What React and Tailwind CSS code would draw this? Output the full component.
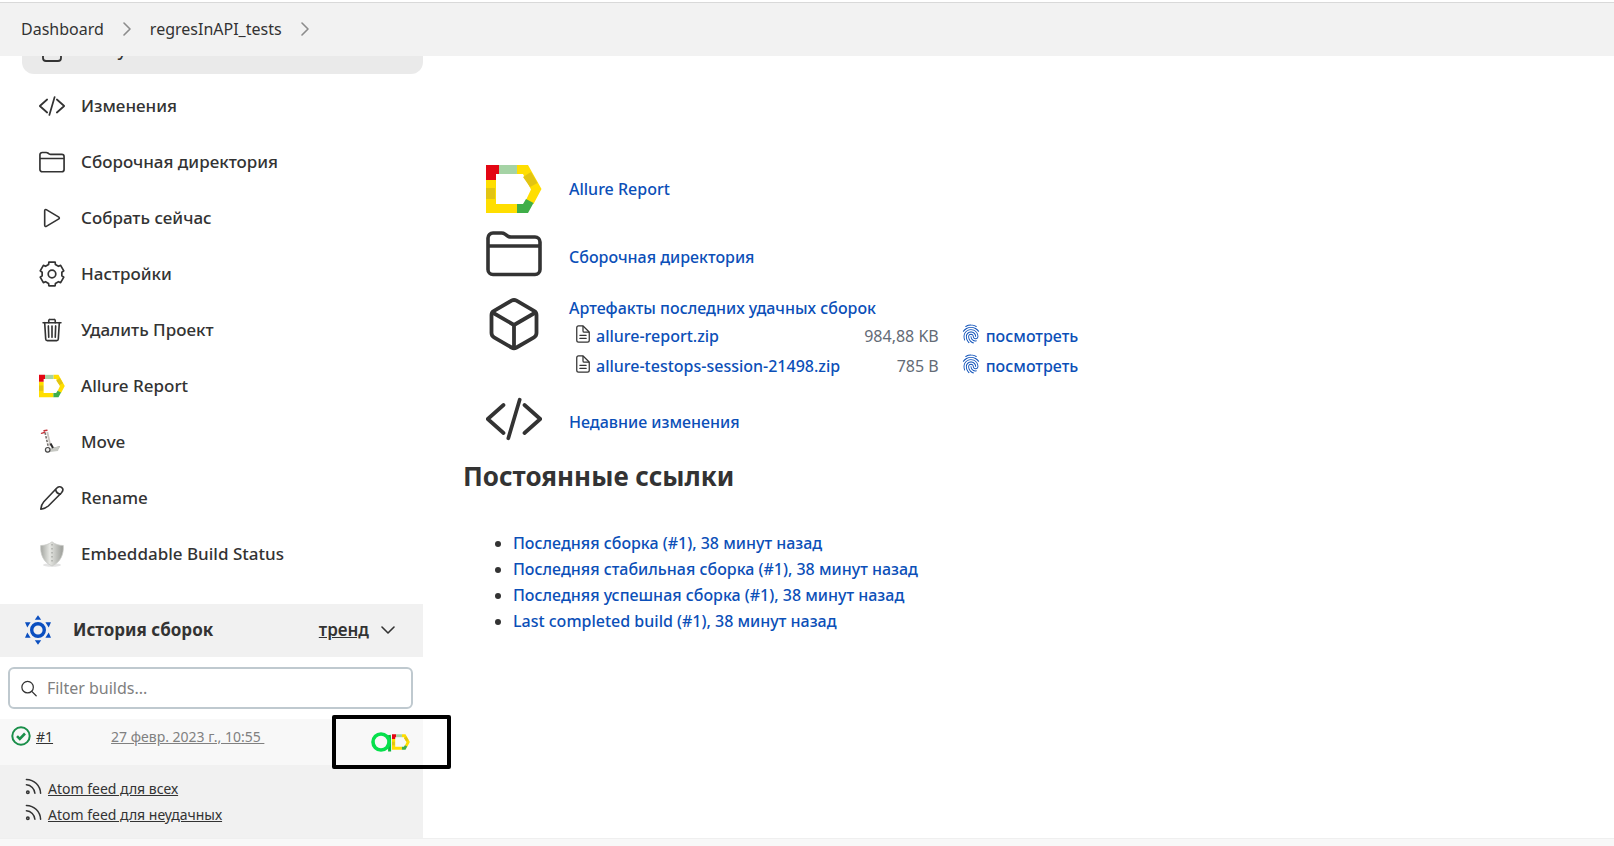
import React from "react";
import {
  IoPlayOutline,
  IoTrashOutline,
  IoFingerPrintOutline,
  IoDocumentTextOutline,
} from "react-icons/io5";

function StatusIcon({ className }) {
  return (
    <svg viewBox="0 0 26 26" fill="none" stroke="currentColor" strokeWidth="1.8" className={className} aria-hidden="true">
      <rect x="4" y="2" width="18" height="22" rx="3" />
      <path d="M8 8h10M8 12h10" strokeLinecap="round" />
    </svg>
  );
}

function CodeIcon({ className }) {
  return (
    <svg viewBox="0 0 512 512" fill="none" stroke="currentColor" strokeWidth="34" strokeLinecap="round" strokeLinejoin="round" className={className} aria-hidden="true">
      <path d="M160 384L16 256l144-128M352 128l144 128-144 128M308 80L204 432" />
    </svg>
  );
}

function FolderIcon({ className }) {
  return (
    <svg viewBox="0 0 56 46" fill="none" stroke="currentColor" strokeWidth="3.6" strokeLinecap="round" strokeLinejoin="round" className={className} aria-hidden="true">
      <path d="M2 7.500a5 5 0 0 1 5-5h8.500a6 6 0 0 1 3.500 1.100l2.600 1.800a6 6 0 0 0 3.500 1.100H49a5 5 0 0 1 5 5V39a5 5 0 0 1-5 5H7a5 5 0 0 1-5-5zM2 15.500h52" />
    </svg>
  );
}

function CubeIcon({ className }) {
  return (
    <svg viewBox="0 0 56 56" fill="none" stroke="currentColor" strokeWidth="3.800" strokeLinecap="round" strokeLinejoin="round" className={className} aria-hidden="true">
      <path d="M25.500 4.700a5 5 0 0 1 5 0L48 14.800a5 5 0 0 1 2.500 4.300v18a5 5 0 0 1-2.500 4.300L30.500 51.500a5 5 0 0 1-5 0L8 41.400a5 5 0 0 1-2.500-4.300v-18A5 5 0 0 1 8 14.800z" />
      <path d="M6.500 16.500L28 29l21.500-12.500M28 29v23" />
    </svg>
  );
}

// Six flat lobes, one every 60 degrees, joined by shallow valleys.
const gearPoints = Array.from({ length: 6 }, (_, i) =>
  [[-15, 12.2], [15, 12.2], [20, 10], [40, 10]].map(([deg, r]) => {
    const a = ((i * 60 + deg - 90) * Math.PI) / 180;
    return `${(13 + r * Math.cos(a)).toFixed(2)} ${(13 + r * Math.sin(a)).toFixed(2)}`;
  }).join("L")
).join("L");

function GearIcon({ className }) {
  return (
    <svg viewBox="0 0 26 26" fill="none" stroke="currentColor" strokeWidth="1.700" strokeLinejoin="round" className={className} aria-hidden="true">
      <path d={`M${gearPoints}Z`} />
      <circle cx="13" cy="13" r="3.800" />
    </svg>
  );
}

function AllureIcon({ className }) {
  return (
    <svg viewBox="0 0 56 48" className={className} aria-hidden="true">
      <path fill="#ffde00" d="M0 15h10v24h21v9H0zM31 0h11l13.500 24-8 15-7.500-4 5-10.500L37 9h-6z" />
      <path fill="#e30613" d="M0 0h13v9H10v6H0z" />
      <path fill="#a5d3a5" d="M13 0h18v9H13z" />
      <path fill="#e2c412" d="M0 23h9v11H0zM37 12l8-5 6.500 11-7.500 4z" />
      <path fill="#3fae49" d="M31 39h6l3-5 7.500 4-5.500 10H31z" />
    </svg>
  );
}

function MoveIcon({ className }) {
  return (
    <svg viewBox="0 0 26 26" fill="none" className={className} aria-hidden="true">
      <path d="M9 22l11-2.500 1-2.500-8 2z" fill="#9b9b96" />
      <path d="M7 23.500l12-1.500 1.500-4.500-9 1.500z" fill="#c7c9c4" />
      <path d="M6 3.500l3.500 15" stroke="#77716e" strokeWidth="1.600" strokeDasharray="2.500 1.200" />
      <path d="M8.300 3l3.200 14" stroke="#c9c5c0" strokeWidth="1.800" />
      <path d="M2.500 4.300l3-1M5 1.800l3-.6" stroke="#c4343a" strokeWidth="1.400" strokeLinecap="round" />
      <path d="M11.500 14.500l2.500 4.500" stroke="#2b2b2b" strokeWidth="2" />
      <circle cx="8.700" cy="20.800" r="2.300" fill="#eee" stroke="#4a4a4a" strokeWidth="1.200" />
    </svg>
  );
}

function PencilIcon({ className }) {
  return (
    <svg viewBox="0 0 26 26" fill="none" stroke="currentColor" strokeWidth="1.600" strokeLinejoin="round" strokeLinecap="round" className={className} aria-hidden="true">
      <path d="M1.800 24.200c.4-3 1.400-5.700 3-7.400L17.600 3.300c1.500-1.600 3.600-2.200 5.200-.7s1.200 3.500-.3 5.100L9.300 21c-1.800 1.700-4.500 2.700-7.500 3.200z" />
      <path d="M16.600 4.500c.5 2.800 2 4.300 4.800 4.700" />
    </svg>
  );
}

function ShieldIcon({ className }) {
  return (
    <svg viewBox="0 0 26 26" className={className} aria-hidden="true">
      <defs>
        <linearGradient id="shield" x1="0" x2="1">
          <stop offset="0" stopColor="#a3a5a0" />
          <stop offset=".4" stopColor="#e6e7e3" />
          <stop offset="1" stopColor="#9a9c97" />
        </linearGradient>
      </defs>
      <ellipse cx="13" cy="24" rx="9" ry="1.800" fill="#e3e3e3" />
      <path d="M13 .8c3 2.500 7 3.700 11.300 3.700C24.800 13 22 21 13 25 4 21 1.200 13 1.700 4.500 6 4.500 10 3.300 13 .8z" fill="url(#shield)" stroke="#c9cac6" strokeWidth=".8" />
      <path d="M13 3v20" stroke="#8d8f8a" strokeWidth=".9" strokeDasharray="1.500 2.500" />
    </svg>
  );
}

function BuildsIcon({ className }) {
  return (
    <svg viewBox="0 0 30 30" fill="#0b4fc0" className={className} aria-hidden="true">
      <circle cx="15" cy="15" r="6.300" fill="none" stroke="#0b4fc0" strokeWidth="3.400" />
      <path d="M15 .2l3.200 4.600h-6.400zM15 29.800l3.200-4.600h-6.400zM2 7.300h5.600l-3.300 5.200zM28 7.300h-5.600l3.300 5.200zM2 22.700h5.600l-3.300-5.200zM28 22.700h-5.600l3.300-5.200z" />
    </svg>
  );
}

function RssIcon({ className }) {
  return (
    <svg viewBox="0 0 18 18" fill="none" stroke="currentColor" strokeWidth="1.600" strokeLinecap="round" className={className} aria-hidden="true">
      <circle cx="3" cy="15" r="1.300" />
      <path d="M1.500 7.200c4.800.2 8.700 4.200 9 9M1.500 1.500c8.300.2 14.700 6.500 15 14.700" />
    </svg>
  );
}

function SearchIcon({ className }) {
  return (
    <svg viewBox="0 0 18 18" fill="none" stroke="currentColor" strokeWidth="1.400" strokeLinecap="round" className={className} aria-hidden="true">
      <circle cx="7.500" cy="7.500" r="6.500" />
      <path d="M12.200 12.200l5 5" />
    </svg>
  );
}

function Chevron({ className, down }) {
  return (
    <svg viewBox="0 0 14 14" fill="none" stroke="currentColor" strokeWidth="1.600" strokeLinecap="round" strokeLinejoin="round" className={className} aria-hidden="true">
      <path d={down ? "M1 4l6 6 6-6" : "M4 1l6 6-6 6"} />
    </svg>
  );
}

function SuccessIcon({ className }) {
  return (
    <svg viewBox="0 0 20 20" fill="none" stroke="#1a8f4a" strokeWidth="2" className={className} aria-hidden="true">
      <circle cx="10" cy="10" r="8.700" />
      <path d="M6 10.200l2.800 2.800L14 7.500" strokeWidth="2.600" />
    </svg>
  );
}

function TestOpsIcon({ className }) {
  return (
    <svg viewBox="0 0 21 20" fill="none" className={className} aria-hidden="true">
      <path d="M18.300 3c.3 2 .3 4 .3 7v9.500" stroke="#0fb53f" strokeWidth="3" />
      <circle cx="10" cy="10" r="8" stroke="#06e04c" strokeWidth="3.600" />
    </svg>
  );
}

const tasks = [
  { label: "Статус", Icon: StatusIcon, active: true },
  { label: "Изменения", Icon: CodeIcon },
  { label: "Сборочная директория", Icon: FolderIcon },
  { label: "Собрать сейчас", Icon: IoPlayOutline },
  { label: "Настройки", Icon: GearIcon },
  { label: "Удалить Проект", Icon: IoTrashOutline },
  { label: "Allure Report", Icon: AllureIcon },
  { label: "Move", Icon: MoveIcon },
  { label: "Rename", Icon: PencilIcon },
  { label: "Embeddable Build Status", Icon: ShieldIcon },
];

const artifacts = [
  { name: "allure-report.zip", size: "984,88 KB" },
  { name: "allure-testops-session-21498.zip", size: "785 B" },
];

const permalinks = [
  "Последняя сборка (#1), 38 минут назад",
  "Последняя стабильная сборка (#1), 38 минут назад",
  "Последняя успешная сборка (#1), 38 минут назад",
  "Last completed build (#1), 38 минут назад",
];

function Breadcrumbs() {
  return (
    <header className="sticky top-0 z-10 border-t-2 border-white bg-[#f2f2f2]">
      <nav aria-label="Breadcrumbs" className="flex h-[54px] items-center border-t border-[#d9d9d9] px-[21px] pb-[2px] text-base">
        <a href="#dashboard">Dashboard</a>
        <Chevron className="mx-4 size-[14px] text-[#8c8c8c]" />
        <a href="#project">regresInAPI_tests</a>
        <Chevron className="mx-4 size-[14px] text-[#8c8c8c]" />
      </nav>
    </header>
  );
}

function BuildHistory() {
  return (
    <section className="mt-[26px]">
      <div className="flex h-[53px] items-center bg-[#f1f1f1] pr-7 pb-[2px] pl-[23px]">
        <BuildsIcon className="size-[30px]" />
        <h2 className="ml-5 text-[17px] font-bold">История сборок</h2>
        <a href="#trend" className="ml-auto text-[17px] font-semibold underline">тренд</a>
        <button type="button" aria-label="Свернуть" className="ml-3">
          <Chevron down className="size-[14px]" />
        </button>
      </div>
      <div className="px-2 py-[10px] pr-[10px]">
        <label className="flex h-[42px] items-center gap-[10px] rounded-md border-2 border-[#bfc9cf] pl-[11px]">
          <SearchIcon className="size-[17px]" />
          <input type="text" aria-label="Filter builds" placeholder="Filter builds..." className="w-full min-w-0 bg-transparent text-base outline-none placeholder:text-[#808080]" />
        </label>
      </div>
      <div className="relative flex h-[46px] items-start bg-[#f8f8f8] pt-[7px] pl-[11px] text-sm leading-[22px]">
        <SuccessIcon className="size-[20px]" />
        <a href="#build-1" className="ml-[5px] underline">#1</a>
        <a href="#build-1" className="ml-[58px] whitespace-pre text-[#808080] underline">{"27 февр. 2023 г., 10:55 "}</a>
        <div className="mt-[6px] mr-[13px] ml-auto flex">
          <TestOpsIcon className="h-[20px] w-[21px]" />
          <AllureIcon className="mt-[2px] h-[16px] w-[18px]" />
        </div>
        <div className="pointer-events-none absolute top-[-4px] right-[-28px] h-[54px] w-[119px] rounded-xs border-4 border-black" />
      </div>
      <div className="flex flex-col items-start gap-1 bg-[#f1f1f1] pt-[13px] pb-3 pl-[25px] text-sm leading-[22px]">
        {["Atom feed для всех", "Atom feed для неудачных"].map((t) => (
          <a key={t} href="#feed" className="flex gap-[6px] underline">
            <RssIcon className="size-[17px]" />
            {t}
          </a>
        ))}
      </div>
    </section>
  );
}

function Sidebar() {
  return (
    <aside className="-mt-[30px] w-[423px] shrink-0">
      <nav aria-label="Project" className="flex flex-col gap-2 pl-[22px]">
        {tasks.map(({ label, Icon, active }) => (
          <a
            key={label}
            href="#task"
            className={active ? "flex h-12 items-center gap-4 rounded-xl bg-[#eaeaea] pl-[17px] text-[17px] font-medium" : "flex h-12 items-center gap-4 rounded-xl pl-[17px] text-[17px] font-medium"}
          >
            <Icon className="size-[26px]" />
            {label}
          </a>
        ))}
      </nav>
      <BuildHistory />
    </aside>
  );
}

function Main() {
  return (
    <main className="min-w-0 flex-1 pt-[109px] pl-10 text-base leading-[26px] font-medium">
      <div className="grid grid-cols-[56px_1fr] items-center gap-x-[27px] pl-[23px] text-[#0b4fb8]">
        <AllureIcon className="h-[48px] w-[56px]" />
        <a href="#allure">Allure Report</a>
        <FolderIcon className="mt-[17px] h-[47px] w-[56px] text-[#333]" />
        <a href="#workspace" className="mt-6">Сборочная директория</a>
        <CubeIcon className="mt-[19px] size-[56px] self-start text-[#333]" />
        <div className="mt-[18px]">
          <a href="#artifacts" className="block">Артефакты последних удачных сборок</a>
          <table>
            <tbody>
              {artifacts.map((a) => (
                <tr key={a.name} className="h-[30px]">
                  <td className="pl-1">
                    <a href="#file" className="flex items-center gap-[3px]">
                      <IoDocumentTextOutline className="mb-1 size-[20px] text-[#333]" />
                      {a.name}
                    </a>
                  </td>
                  <td className="pl-6 text-right font-normal text-[#636b76]">{a.size}</td>
                  <td className="pl-[22px]">
                    <a href="#view" className="flex items-center gap-[5px]">
                      <IoFingerPrintOutline className="mb-1 size-[20px]" />
                      посмотреть
                    </a>
                  </td>
                </tr>
              ))}
            </tbody>
          </table>
        </div>
        <CodeIcon className="mt-[10px] size-[56px] text-[#333]" />
        <a href="#changes" className="mt-4">Недавние изменения</a>
      </div>
      <h2 className="mt-[11px] text-[26px] leading-9 font-bold">Постоянные ссылки</h2>
      <ul className="mt-9 list-disc pl-[50px]">
        {permalinks.map((p) => (
          <li key={p}>
            <a href="#build" className="text-[#0b4fb8]">{p}</a>
          </li>
        ))}
      </ul>
    </main>
  );
}

export default function App() {
  return (
    <div className="flex min-h-screen flex-col bg-white font-['Noto_Sans',sans-serif] text-[#333]">
      <Breadcrumbs />
      <div className="flex">
        <Sidebar />
        <Main />
      </div>
      <footer className="flex-1 border-t border-[#efefef] bg-[#f8f8f8]" />
    </div>
  );
}
